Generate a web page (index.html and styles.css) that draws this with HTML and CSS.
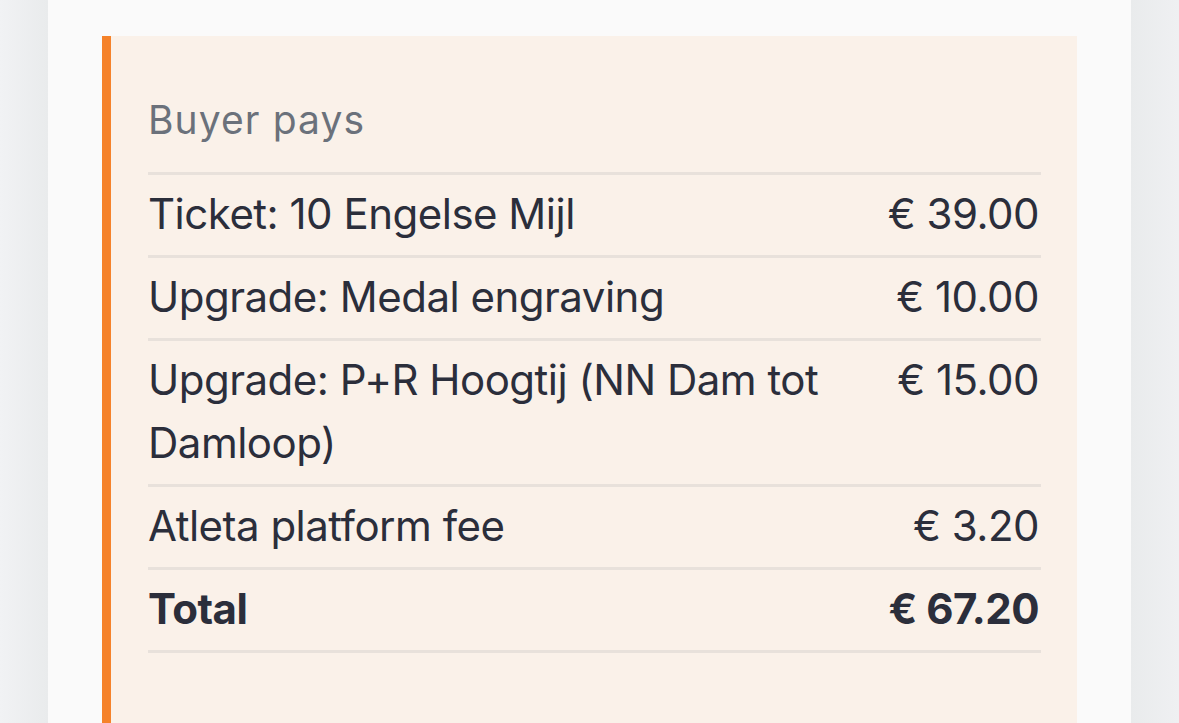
FILE: index.html
```html
<!DOCTYPE html>
<html lang="en">
<head>
  <meta charset="UTF-8">
  <meta name="viewport" content="width=device-width, initial-scale=1.0">
  <title>Order summary</title>
  <link rel="stylesheet" href="styles.css">
</head>
<body>
  <div class="page">
    <div class="card">
      <div class="summary">
        <h2 class="summary-title">Buyer pays</h2>
        <div class="line">
          <span class="label">Ticket: 10 Engelse Mijl</span>
          <span class="amount">€ 39.00</span>
        </div>
        <div class="line">
          <span class="label">Upgrade: Medal engraving</span>
          <span class="amount">€ 10.00</span>
        </div>
        <div class="line">
          <span class="label">Upgrade: P+R Hoogtij (NN Dam tot Damloop)</span>
          <span class="amount">€ 15.00</span>
        </div>
        <div class="line">
          <span class="label">Atleta platform fee</span>
          <span class="amount">€ 3.20</span>
        </div>
        <div class="line total">
          <span class="label">Total</span>
          <span class="amount">€ 67.20</span>
        </div>
        <div class="line-end"></div>

        <h2 class="summary-title next">Organiser receives</h2>
      </div>
    </div>
  </div>
</body>
</html>
```

FILE: styles.css
```css
html, body {
  margin: 0;
  padding: 0;
}
body {
  font-family: Inter, "Noto Sans", sans-serif;
  background: linear-gradient(to right, #f1f2f4 0, #e9ebec 48px, #e9ebec 1131px, #eff0f2 100%);
  color: #2b2e3b;
  height: 723px;
  overflow: hidden;
}
.page {
  padding: 0 48px;
}
.card {
  background-color: #fafafa;
  padding: 36px 54px 0;
  min-height: 723px;
  box-sizing: border-box;
}
.summary {
  background-color: #faf1e9;
  border-left: 9px solid #f5822a;
  padding: 57px 36px 40px 37px;
}
.summary-title {
  margin: 0 0 25px;
  font-size: 39px;
  line-height: 54px;
  font-weight: 400;
  letter-spacing: 1.1px;
  color: #6b717b;
}
.summary-title.next {
  margin-top: 64px;
}
.line {
  display: flex;
  justify-content: space-between;
  align-items: flex-start;
  gap: 40px;
  border-top: 3px solid #e8e1db;
  padding: 7px 2px 10px 0;
  font-size: 42px;
  line-height: 63px;
  letter-spacing: -0.5px;
}
.line .label {
  flex: 1;
}
.line .amount {
  white-space: nowrap;
}
.line.total {
  font-weight: 700;
}
.line-end {
  border-top: 3px solid #e8e1db;
}
```
